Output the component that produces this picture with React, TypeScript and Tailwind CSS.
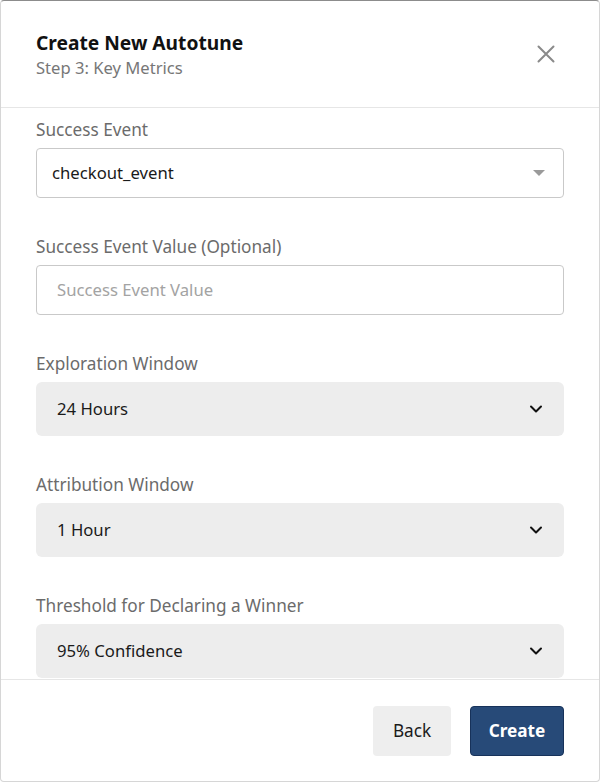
import React from "react";

const Chevron = () => (
  <svg width="16" height="16" viewBox="0 0 16 16" fill="none">
    <path d="M3 5.5L8 10.5L13 5.5" stroke="#111" strokeWidth="2" strokeLinecap="round" strokeLinejoin="round" />
  </svg>
);

const GraySelect = ({ value }: { value: string }) => (
  <div className="flex h-[54px] items-center justify-between rounded-md bg-[#ededed] pl-[21px] pr-[20px]">
    <span className="text-[16.7px] text-[#1a1a1a]">{value}</span>
    <Chevron />
  </div>
);

const Label = ({ children }: { children: React.ReactNode }) => (
  <div className="mb-[6px] text-[17.2px] leading-[24px] text-[#6b6b6b]">{children}</div>
);

export default function App() {
  return (
    <div
      className="flex h-[782px] w-[600px] flex-col overflow-hidden rounded-[4px] border border-[#d6d6d6] border-t-[#8c8c8c] bg-white"
      style={{ fontFamily: '"Noto Sans", "Open Sans", sans-serif' }}
    >
      <div className="flex h-[107px] shrink-0 items-start justify-between border-b border-[#e6e6e6] pl-[35px] pr-[44px] pt-[29px]">
        <div>
          <div className="text-[19.2px] font-bold leading-[26px] text-[#111]">Create New Autotune</div>
          <div className="text-[16.6px] leading-[23px] text-[#777]">Step 3: Key Metrics</div>
        </div>
        <svg className="mt-[15px]" width="18" height="18" viewBox="0 0 18 18" fill="none">
          <path d="M1.5 1.5L16.5 16.5M16.5 1.5L1.5 16.5" stroke="#8a8a8a" strokeWidth="2" strokeLinecap="round" />
        </svg>
      </div>

      <div className="flex-1 overflow-hidden px-[35px] pt-[10px]">
        <Label>Success Event</Label>
        <div className="flex h-[50px] items-center justify-between rounded-[4px] border border-[#c9c9c9] pl-[15px] pr-[18px]">
          <span className="text-[16.7px] text-[#1a1a1a]">checkout_event</span>
          <svg width="12" height="6" viewBox="0 0 12 6">
            <path d="M0 0H12L6 6Z" fill="#9a9a9a" />
          </svg>
        </div>

        <div className="mt-[37px]">
          <Label>Success Event Value (Optional)</Label>
          <div className="flex h-[50px] items-center rounded-[4px] border border-[#c9c9c9] pl-[20px]">
            <span className="text-[16.7px] text-[#a3a3a3]">Success Event Value</span>
          </div>
        </div>

        <div className="mt-[37px]">
          <Label>Exploration Window</Label>
          <GraySelect value="24 Hours" />
        </div>

        <div className="mt-[37px]">
          <Label>Attribution Window</Label>
          <GraySelect value="1 Hour" />
        </div>

        <div className="mt-[37px]">
          <Label>Threshold for Declaring a Winner</Label>
          <GraySelect value="95% Confidence" />
        </div>
      </div>

      <div className="flex h-[102px] shrink-0 items-center justify-end gap-[19px] border-t border-[#e6e6e6] pr-[35px]">
        <button className="h-[50px] w-[78px] rounded-[4px] bg-[#eeeeee] text-[17.2px] text-[#1a1a1a]">Back</button>
        <button className="h-[50px] w-[94px] rounded-[4px] border border-[#17325a] bg-[#274a78] text-[17.2px] font-bold text-white">
          Create
        </button>
      </div>
    </div>
  );
}
